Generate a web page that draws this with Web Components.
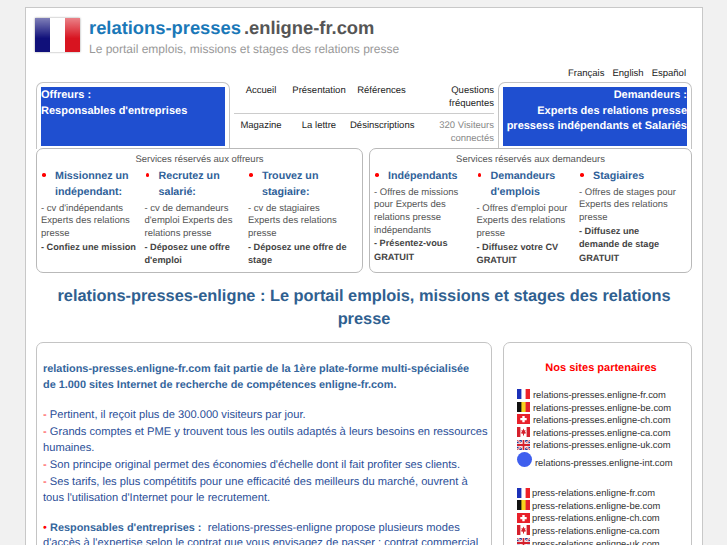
<!DOCTYPE html>
<html lang="fr">
<head>
<meta charset="utf-8">
<title>relations-presses.enligne-fr.com</title>
<style>
    html, body { margin: 0; height: 545px; overflow: hidden; }
    body {
        background: #f1f1f1;
        font-family: "Liberation Sans", Arial, sans-serif;
        font-size: 10px;
        color: #333;
        text-rendering: geometricPrecision;
    }
</style>
</head>
<body>
<site-page></site-page>

<template id="flag-tpl">
    <style>
        :host { display: inline-flex; flex: none; margin-bottom: 2px; }
        svg { display: block; }
    </style>
    <svg viewBox="0 0 13 10" width="13" height="10"></svg>
</template>

<script>
const FLAGS = {
    fr: '<rect width="13" height="10" fill="#fff"/><rect width="4.4" height="10" fill="#1c31b8"/><rect x="8.6" width="4.4" height="10" fill="#ee2028"/>',
    be: '<rect width="13" height="10" fill="#f7d21e"/><rect width="4.4" height="10" fill="#111"/><rect x="8.6" width="4.4" height="10" fill="#e5202c"/>',
    ch: '<rect width="13" height="10" fill="#e8202a"/><path d="M5.3 2h2.4v2h2v2.2h-2v2H5.3v-2h-2V4h2z" fill="#fff"/>',
    ca: '<rect width="13" height="10" fill="#fff"/><rect width="3.4" height="10" fill="#d5202c"/><rect x="9.6" width="3.4" height="10" fill="#d5202c"/><path d="M6.5 1.6 7.4 3.4 8.6 3 8 5.2 9.2 5.4 8.6 6.6 7 6.8V8.4H6V6.8L4.4 6.6 3.8 5.4 5 5.2 4.4 3 5.6 3.4z" fill="#d5202c"/>',
    uk: '<rect width="13" height="10" fill="#28348c"/><path d="M0 0 13 10M13 0 0 10" stroke="#fff" stroke-width="2"/><path d="M0 0 13 10M13 0 0 10" stroke="#d5202c" stroke-width=".8"/><path d="M6.5 0V10M0 5H13" stroke="#fff" stroke-width="3.4"/><path d="M6.5 0V10M0 5H13" stroke="#d5202c" stroke-width="1.8"/>'
};

class SiteFlag extends HTMLElement {
    constructor() {
        super();
        this.attachShadow({ mode: 'open' });
        this.shadowRoot.appendChild(document.getElementById('flag-tpl').content.cloneNode(true));
        this.shadowRoot.querySelector('svg').innerHTML = FLAGS[this.getAttribute('code')] || '';
    }
}
customElements.define('site-flag', SiteFlag);

// round bordered box, used everywhere on the page
class RoundBox extends HTMLElement {
    constructor() {
        super();
        this.attachShadow({ mode: 'open' }).innerHTML = `
            <style>
                :host {
                    display: block;
                    box-sizing: border-box;
                    background: #fff;
                    border: 1px solid #c4c4c4;
                    border-radius: 7px;
                    padding: var(--pad, 4px);
                }
            </style>
            <slot></slot>`;
    }
}
customElements.define('round-box', RoundBox);

class SiteHeader extends HTMLElement {
    constructor() {
        super();
        this.attachShadow({ mode: 'open' }).innerHTML = `
            <style>
                :host { display: flex; gap: 9px; height: 58px; padding: 10px 0 0 9px; box-sizing: border-box; }
                .flag {
                    width: 45px; height: 34px; flex: none; box-shadow: 0 0 2px #999;
                    background: linear-gradient(90deg, #10107a 0 33%, #fff 33% 66%, #d81420 66%);
                }
                .flag::after { content: ""; display: block; height: 100%; background: linear-gradient(#ffffff77, #ffffff00 60%); }
                h1 { margin: 0; font-size: 18.35px; line-height: 20px; font-weight: bold; color: #555; }
                h1 span { color: #1a78b8; margin-right: 3px; }
                p { margin: 4px 0 0; font-size: 12px; line-height: 15px; color: #999; }
            </style>
            <div class="flag"></div>
            <div>
                <h1><span>relations-presses</span>.enligne-fr.com</h1>
                <p>Le portail emplois, missions et stages des relations presse</p>
            </div>`;
    }
}
customElements.define('site-header', SiteHeader);

class LangBar extends HTMLElement {
    constructor() {
        super();
        this.attachShadow({ mode: 'open' }).innerHTML = `
            <style>
                :host { display: flex; justify-content: flex-end; gap: 8px; height: 14px; padding: 2px 16px 0 0; font-size: 9.5px; line-height: 12px; color: #222; }
            </style>
            <span>Français</span><span>English</span><span>Español</span>`;
    }
}
customElements.define('lang-bar', LangBar);

class AudiencePanel extends HTMLElement {
    constructor() {
        super();
        this.attachShadow({ mode: 'open' }).innerHTML = `
            <style>
                :host { display: block; box-sizing: border-box; height: 67px; background: #fff; border: 1px solid #c4c4c4; border-bottom: 0; border-radius: 7px 7px 0 0; padding: 4px 4px 0; }
                div {
                    height: 59px; box-sizing: border-box; padding-top: 1px;
                    background: #1f4fd0; color: #fff; font-weight: bold; font-size: 11px; line-height: 15.5px;
                }
                :host([right]) div { text-align: right; }
            </style>
            <div><slot></slot></div>`;
    }
}
customElements.define('audience-panel', AudiencePanel);

class MainNav extends HTMLElement {
    constructor() {
        super();
        this.attachShadow({ mode: 'open' }).innerHTML = `
            <style>
                :host { display: block; font-size: 9.5px; line-height: 13px; color: #222; padding: 0 2px; }
                .row { display: grid; grid-template-columns: 54px 62px 57px 1fr; text-align: center; align-items: start; }
                .top { height: 29px; border-bottom: 1px solid #ccc; padding-top: 2px; }
                .bottom { padding-top: 5px; }
                .last { text-align: right; }
                .muted { color: #888; }
                .ref { padding-left: 6px; white-space: nowrap; }
            </style>
            <div class="row top"><span>Accueil</span><span>Présentation</span><span class="ref">Références</span><span class="last">Questions<br>fréquentes</span></div>
            <div class="row bottom"><span>Magazine</span><span>La lettre</span><span>Désinscriptions</span><span class="last muted">320 Visiteurs<br>connectés</span></div>`;
    }
}
customElements.define('main-nav', MainNav);

// one column of a services box
class ServiceCol extends HTMLElement {
    constructor() {
        super();
        this.attachShadow({ mode: 'open' }).innerHTML = `
            <style>
                :host { display: block; font-size: 9.5px; line-height: 12.7px; color: #555; }
                h3 { position: relative; margin: 0 0 2.5px; padding-left: 14px; font-size: 10.7px; line-height: 16px; font-weight: bold; color: #2f6199; }
                h3::before { content: ""; position: absolute; left: 1px; top: 5px; width: 3.5px; height: 3.5px; border-radius: 50%; background: #f00; }
                ::slotted(b) { color: #444; font-size: 9.2px; }
            </style>
            <h3><slot name="title"></slot></h3>
            <slot></slot>`;
    }
}
customElements.define('service-col', ServiceCol);

class ServiceBox extends HTMLElement {
    constructor() {
        super();
        this.attachShadow({ mode: 'open' }).innerHTML = `
            <style>
                :host { display: block; box-sizing: border-box; height: 125px; background: #fff; border: 1px solid #b9b9b9; border-radius: 7px; padding: 5px 0 0 4px; }
                .cap { text-align: center; font-size: 9.5px; line-height: 12px; color: #555; margin-bottom: 2px; padding-right: 4px; }
                .cols { display: grid; grid-template-columns: repeat(3, var(--col, 100.5px)); column-gap: 3px; }
            </style>
            <div class="cap"><slot name="cap"></slot></div>
            <div class="cols"><slot></slot></div>`;
    }
}
customElements.define('service-box', ServiceBox);

class PartnerList extends HTMLElement {
    constructor() {
        super();
        const rows = (base, codes) => codes.map(c => `<li><site-flag code="${c}"></site-flag><span>${base}.enligne-${c}.com</span></li>`).join('');
        const all = ['fr', 'be', 'ch', 'ca', 'uk'];
        this.attachShadow({ mode: 'open' }).innerHTML = `
            <style>
                :host { display: block; font-size: 9.4px; line-height: 12.6px; color: #333; }
                h2 { margin: 0 0 14px; text-align: center; font-size: 11px; line-height: 14px; color: #f00; padding: 18px 0 0 7px; }
                ul { list-style: none; margin: 0 0 17.7px; padding: 0 0 0 13px; }
                li { display: flex; align-items: center; gap: 3px; white-space: nowrap; }
                ul + ul li { gap: 2px; }
                li.int { align-items: flex-start; }
                li.int span:last-child { padding-top: 5px; }
                .dot { width: 15px; height: 15px; border-radius: 50%; background: #3f5fee; }
            </style>
            <h2>Nos sites partenaires</h2>
            <ul>${rows('relations-presses', all)}<li class="int"><span class="dot"></span><span>relations-presses.enligne-int.com</span></li></ul>
            <ul>${rows('press-relations', all)}</ul>`;
    }
}
customElements.define('partner-list', PartnerList);

class SitePage extends HTMLElement {
    constructor() {
        super();
        this.attachShadow({ mode: 'open' }).innerHTML = `
            <style>
                :host { display: block; box-sizing: border-box; width: 678px; height: 538px; margin: 7px 0 0 25px; background: #fff; border: 1px solid #c8c8c8; border-bottom: 0; overflow: hidden; }
                .top { display: grid; grid-template-columns: 194px 1fr 194px; margin: 0 10px; column-gap: 2px; }
                .services { display: grid; grid-template-columns: 327px 323px; column-gap: 6px; margin: -1px 10px 0; position: relative; }
                .services service-box:last-child { --col: 99.5px; }
                h2 { margin: 12px 10px 11px; text-align: center; font-size: 16.35px; line-height: 23px; color: #2f6090; }
                .bottom { display: grid; grid-template-columns: 456px 189px; column-gap: 11px; margin: 0 10px; align-items: start; }
                .bottom round-box { height: 220px; --pad: 0; overflow: hidden; }
                .text { padding: 19px 3px 0 6px; font-size: 11.15px; line-height: 15.6px; color: #2c4f98; }
                .text p { margin: 0 0 1.7px; }
                .text p.lead { color: #34659c; font-weight: bold; font-size: 10.9px; margin-bottom: 14.5px; padding-right: 8px; }
                .text p.end { margin-bottom: 14.5px; }
                .r { color: #f00; }
                b.h { color: #34659c; font-size: 10.9px; }
            </style>
            <site-header></site-header>
            <lang-bar></lang-bar>
            <div class="top">
                <audience-panel>Offreurs :<br>Responsables d'entreprises</audience-panel>
                <main-nav></main-nav>
                <audience-panel right>Demandeurs :<br>Experts des relations presse<br>pressess indépendants et Salariés</audience-panel>
            </div>
            <div class="services">
                <service-box>
                    <span slot="cap">Services réservés aux offreurs</span>
                    <service-col><span slot="title">Missionnez un indépendant:</span>- cv d'indépendants Experts des relations presse<br><b>- Confiez une mission</b></service-col>
                    <service-col><span slot="title">Recrutez un salarié:</span>- cv de demandeurs d'emploi Experts des relations presse<br><b>- Déposez une offre d'emploi</b></service-col>
                    <service-col><span slot="title">Trouvez un stagiaire:</span>- cv de stagiaires Experts des relations presse<br><b>- Déposez une offre de stage</b></service-col>
                </service-box>
                <service-box>
                    <span slot="cap">Services réservés aux demandeurs</span>
                    <service-col><span slot="title">Indépendants</span>- Offres de missions pour Experts des relations presse indépendants<br><b>- Présentez-vous GRATUIT</b></service-col>
                    <service-col><span slot="title">Demandeurs d'emplois</span>- Offres d'emploi pour Experts des relations presse<br><b>- Diffusez votre CV GRATUIT</b></service-col>
                    <service-col><span slot="title">Stagiaires</span>- Offres de stages pour Experts des relations presse<br><b>- Diffusez une demande de stage GRATUIT</b></service-col>
                </service-box>
            </div>
            <h2>relations-presses-enligne : Le portail emplois, missions et stages des relations presse</h2>
            <div class="bottom">
                <round-box>
                    <div class="text">
                        <p class="lead">relations-presses.enligne-fr.com fait partie de la 1ère plate-forme multi-spécialisée de 1.000 sites Internet de recherche de compétences enligne-fr.com.</p>
                        <p><span class="r">-</span> Pertinent, il reçoit plus de 300.000 visiteurs par jour.</p>
                        <p><span class="r">-</span> Grands comptes et PME y trouvent tous les outils adaptés à leurs besoins en ressources humaines.</p>
                        <p><span class="r">-</span> Son principe original permet des économies d'échelle dont il fait profiter ses clients.</p>
                        <p class="end"><span class="r">-</span> Ses tarifs, les plus compétitifs pour une efficacité des meilleurs du marché, ouvrent à tous l'utilisation d'Internet pour le recrutement.</p>
                        <p><span class="r">•</span> <b class="h">Responsables d'entreprises :</b>&nbsp; relations-presses-enligne propose plusieurs modes d'accès à l'expertise selon le contrat que vous envisagez de passer : contrat commercial</p>
                    </div>
                </round-box>
                <round-box><partner-list></partner-list></round-box>
            </div>`;
    }
}
customElements.define('site-page', SitePage);
</script>
</body>
</html>
